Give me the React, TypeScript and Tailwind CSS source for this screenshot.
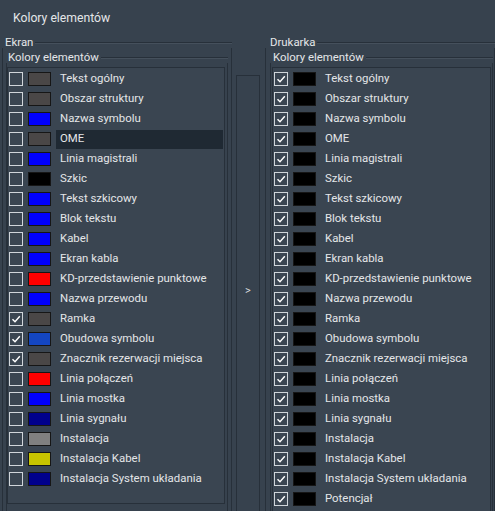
import { FC } from 'react';

type Item = { name: string; color: string; checked: boolean };

const screenItems: Item[] = [
  { name: 'Tekst ogólny', color: '#4a4747', checked: false },
  { name: 'Obszar struktury', color: '#4a4747', checked: false },
  { name: 'Nazwa symbolu', color: '#0000ff', checked: false },
  { name: 'OME', color: '#4a4747', checked: false },
  { name: 'Linia magistrali', color: '#0000ff', checked: false },
  { name: 'Szkic', color: '#000000', checked: false },
  { name: 'Tekst szkicowy', color: '#0000ff', checked: false },
  { name: 'Blok tekstu', color: '#0000ff', checked: false },
  { name: 'Kabel', color: '#0000ff', checked: false },
  { name: 'Ekran kabla', color: '#0000ff', checked: false },
  { name: 'KD-przedstawienie punktowe', color: '#ff0000', checked: false },
  { name: 'Nazwa przewodu', color: '#0000ff', checked: false },
  { name: 'Ramka', color: '#4a4747', checked: true },
  { name: 'Obudowa symbolu', color: '#1446c2', checked: true },
  { name: 'Znacznik rezerwacji miejsca', color: '#4a4747', checked: true },
  { name: 'Linia połączeń', color: '#ff0000', checked: false },
  { name: 'Linia mostka', color: '#0000ff', checked: false },
  { name: 'Linia sygnału', color: '#00008c', checked: false },
  { name: 'Instalacja', color: '#808080', checked: false },
  { name: 'Instalacja Kabel', color: '#c8c400', checked: false },
  { name: 'Instalacja System układania', color: '#00008c', checked: false },
];

const printerItems: Item[] = [
  ...screenItems.map((i) => ({ name: i.name, color: '#000000', checked: true })),
  { name: 'Potencjał', color: '#000000', checked: true },
];

const CheckBox: FC<{ checked: boolean }> = ({ checked }) => (
  <div className="w-[14px] h-[14px] border border-[#d0d5da] flex items-center justify-center shrink-0">
    {checked && (
      <svg width="10" height="10" viewBox="0 0 10 10">
        <polyline
          points="1.5,5.2 4,7.8 8.8,2.2"
          fill="none"
          stroke="#ffffff"
          strokeWidth="1.4"
        />
      </svg>
    )}
  </div>
);

const ColorList: FC<{ items: Item[]; selected?: string; className: string }> = ({
  items,
  selected,
  className,
}) => (
  <div className={`border border-[#27303a] bg-[#3a4551] pt-px ${className}`}>
    {items.map((item) => (
      <div className="flex items-center h-[20px] pl-[1px]" key={item.name}>
        <CheckBox checked={item.checked} />
        <div
          className="w-[23px] h-[14px] ml-[5px] border border-[#161616] shrink-0"
          style={{ backgroundColor: item.color }}
        />
        <div
          className={`flex-1 h-[19px] ml-[5px] mr-[1px] pl-[4px] flex items-center whitespace-nowrap ${
            selected === item.name ? 'bg-[#1f2933]' : ''
          }`}
        >
          {item.name}
        </div>
      </div>
    ))}
  </div>
);

const GroupHeader: FC<{ label: string }> = ({ label }) => (
  <div className="flex items-center h-[12px] leading-[12px]">
    <span className="pr-[2px]">{label}</span>
    <div className="flex-1 h-px bg-[#27303a] shadow-[0_1px_0_#45505c]" />
  </div>
);

export default function App() {
  return (
    <div className="w-[495px] h-[511px] overflow-hidden bg-[#37424e] text-[#e4e6e8] text-[11.4px] font-['Roboto',Arial,sans-serif]">
      <div className="h-[36px] pl-[13px] pt-[10px] text-[12.2px] leading-[16px]">
        Kolory elementów
      </div>
      <div className="flex">
        {/* Ekran */}
        <div className="w-[230px] ml-[2px]">
          <div className="pl-[3px]">
            <GroupHeader label="Ekran" />
          </div>
          <div className="border-l border-r border-[#27303a] h-[480px] px-[3px] pt-[3px]">
            <div className="pl-[2px]">
              <GroupHeader label="Kolory elementów" />
            </div>
            <div className="border-l border-r border-[#27303a] h-[470px] pt-[4px] pr-[2px]">
              <ColorList items={screenItems} selected="OME" className="h-[437px]" />
            </div>
          </div>
        </div>

        {/* przycisk */}
        <div className="w-[24px] ml-[4px] mt-[39px] h-[440px] border border-[#27303a] flex items-center justify-center">
          <span className="text-[11px] text-[#d8dadc] -mt-[8px]">&gt;</span>
        </div>

        {/* Drukarka */}
        <div className="flex-1 ml-[5px]">
          <div className="pl-[5px]">
            <GroupHeader label="Drukarka" />
          </div>
          <div className="border-l border-r border-[#27303a] h-[480px] pl-[4px] pr-[1px] pt-[3px]">
            <div className="pl-[3px]">
              <GroupHeader label="Kolory elementów" />
            </div>
            <div className="border-l border-r border-[#27303a] h-[470px] pt-[4px] pl-[1px] pr-[1px]">
              <ColorList items={printerItems} className="h-[470px]" />
            </div>
          </div>
        </div>
      </div>
    </div>
  );
}
